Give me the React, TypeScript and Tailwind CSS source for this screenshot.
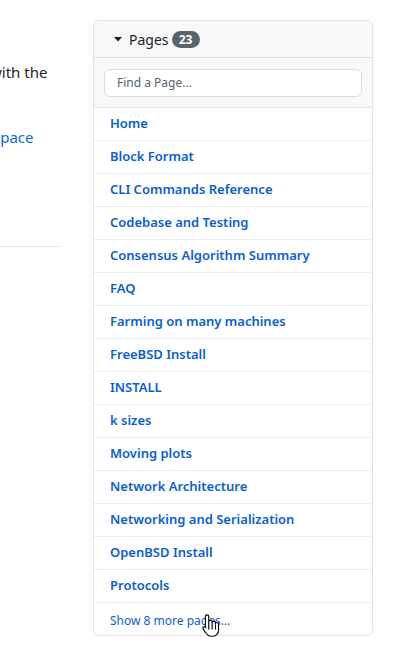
import React from 'react'

const PAGES = [
  'Home',
  'Block Format',
  'CLI Commands Reference',
  'Codebase and Testing',
  'Consensus Algorithm Summary',
  'FAQ',
  'Farming on many machines',
  'FreeBSD Install',
  'INSTALL',
  'k sizes',
  'Moving plots',
  'Network Architecture',
  'Networking and Serialization',
  'OpenBSD Install',
  'Protocols',
]

function HandCursor() {
  return (
    <svg width="18" height="25" viewBox="0 0 16 22" className="absolute left-[108px] top-[10px]">
      <path
        d="M4.5 1.5c.8 0 1.5.7 1.5 1.5v6.2V7.8c0-.8.7-1.5 1.5-1.5S9 7 9 7.8v1.4-.6c0-.8.7-1.5 1.5-1.5S12 7.8 12 8.6v1 0c0-.8.6-1.3 1.3-1.3s1.4.6 1.4 1.3V15c0 3-2 5.5-5 5.5H8c-2 0-3.2-.9-4.3-2.4L1.2 14.4c-.5-.7-.4-1.6.3-2s1.5-.3 2 .4L3 12V3c0-.8.7-1.5 1.5-1.5z"
        fill="#fff"
        stroke="#000"
        strokeWidth="1"
        strokeLinejoin="round"
      />
      <path d="M6 9.5v5M9 9.5v5M12 10v4.5" stroke="#000" strokeWidth="1" />
    </svg>
  )
}

export default function App() {
  return (
    <div className="w-[400px] h-[660px] bg-white flex overflow-hidden" style={{ fontFamily: '"Noto Sans", "Open Sans", sans-serif' }}>
      {/* main content, cut off on the left */}
      <div className="w-[61px] shrink-0 overflow-hidden flex flex-col">
        <p className="mt-[61px] ml-[-10px] whitespace-nowrap text-[15px] leading-[22px] text-[#1f2328]">with the</p>
        <p className="mt-[43px] ml-[-7px] whitespace-nowrap text-[15px] leading-[22px] text-[#0969da]">space</p>
        <div className="mt-[98px] h-px bg-[#e5e7ea]" />
      </div>

      {/* sidebar */}
      <div className="ml-[32px] mt-[20px] w-[280px] h-[616px] shrink-0 border border-[#dfe2e6] rounded-md flex flex-col">
        <div className="h-[37px] bg-[#f6f8fa] rounded-t-md border-b border-[#dfe2e6] flex items-center pl-[20px]">
          <svg width="8" height="5" viewBox="0 0 8 5">
            <path d="M0 0h8L4 4.5z" fill="#1f2328" />
          </svg>
          <span className="text-[14px] text-[#1f2328] ml-[7px]">Pages</span>
          <span className="ml-[3px] h-[17px] min-w-[28px] px-[6px] rounded-full bg-[#59636e] text-white text-[12px] font-bold leading-[17px] text-center">23</span>
        </div>
        <div className="h-[50px] bg-[#f6f8fa] border-b border-[#e5e7ea] px-[10px] flex items-center">
          <div className="h-[28px] w-full bg-white border border-[#d9dde1] rounded-md flex items-center px-[12px] text-[12px] text-[#59636e]">
            Find a Page…
          </div>
        </div>
        <ul className="flex flex-col">
          {PAGES.map(p => (
            <li key={p} className="h-[33px] border-b border-[#eaecef] flex items-center pl-[16px] text-[13px] font-semibold text-[#0a5ecf]">
              {p}
            </li>
          ))}
        </ul>
        <div className="relative flex-1 flex items-center pl-[16px] pt-[3px] text-[12px] text-[#0a5ecf]">
          Show 8 more pages…
          <HandCursor />
        </div>
      </div>
    </div>
  )
}
